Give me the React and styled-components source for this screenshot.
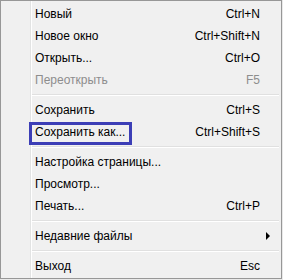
import React from "react";
import styled, { createGlobalStyle } from "styled-components";

const GlobalStyle = createGlobalStyle`
  html, body {
    margin: 0;
    padding: 0;
    background: #e9e9e9;
  }
  body {
    font-family: "Liberation Sans", Arial, sans-serif;
  }
`;

const items = [
  { label: "Новый", shortcut: "Ctrl+N" },
  { label: "Новое окно", shortcut: "Ctrl+Shift+N" },
  { label: "Открыть...", shortcut: "Ctrl+O" },
  { label: "Переоткрыть", shortcut: "F5", disabled: true },
  { separator: true },
  { label: "Сохранить", shortcut: "Ctrl+S" },
  { label: "Сохранить как...", shortcut: "Ctrl+Shift+S", marked: true },
  { separator: true },
  { label: "Настройка страницы..." },
  { label: "Просмотр..." },
  { label: "Печать...", shortcut: "Ctrl+P" },
  { separator: true },
  { label: "Недавние файлы", submenu: true },
  { separator: true },
  { label: "Выход", shortcut: "Esc" },
];

const App = () => {
  return (
    <>
      <GlobalStyle />
      <Menu>
        {items.map((item, i) =>
          item.separator ? (
            <Separator key={i} />
          ) : (
            <Row key={i} $disabled={item.disabled}>
              <Label $marked={item.marked}>{item.label}</Label>
              {item.shortcut && <Shortcut>{item.shortcut}</Shortcut>}
              {item.submenu && <Arrow />}
            </Row>
          )
        )}
      </Menu>
    </>
  );
};

export default App;

const Menu = styled.div`
  width: 282px;
  height: 279px;
  box-sizing: border-box;
  border: 1px solid #979797;
  padding: 2px 2px 1px;
  background-color: #f0f0f0;
  background-image: linear-gradient(
    to right,
    transparent 29px,
    #e2e3e3 29px,
    #e2e3e3 30px,
    #ffffff 30px,
    #ffffff 31px,
    transparent 31px
  );
  display: flex;
  flex-direction: column;
`;

const Row = styled.div`
  height: 22px;
  display: flex;
  align-items: center;
  padding: 0 19px 0 32px;
  font-size: 12px;
  color: ${(p) => (p.$disabled ? "#8d8d8d" : "#000")};
`;

const Label = styled.span`
  flex: 1;
  position: relative;
  line-height: 22px;

  ${(p) =>
    p.$marked &&
    `
    &::after {
      content: "";
      position: absolute;
      left: -6px;
      top: 1px;
      width: 103px;
      height: 23px;
      box-sizing: border-box;
      border: 3px solid #3c3eb6;
    }
  `}
`;

const Shortcut = styled.span`
  white-space: nowrap;
`;

const Arrow = styled.span`
  width: 0;
  height: 0;
  margin-right: -10px;
  border-top: 4px solid transparent;
  border-bottom: 4px solid transparent;
  border-left: 4px solid #000;
`;

const Separator = styled.div`
  height: 8px;
  margin-left: 29px;
  display: flex;
  flex-direction: column;
  justify-content: center;

  &::before {
    content: "";
    height: 1px;
    background: #e0e0e0;
  }
  &::after {
    content: "";
    height: 1px;
    background: #ffffff;
  }
`;
